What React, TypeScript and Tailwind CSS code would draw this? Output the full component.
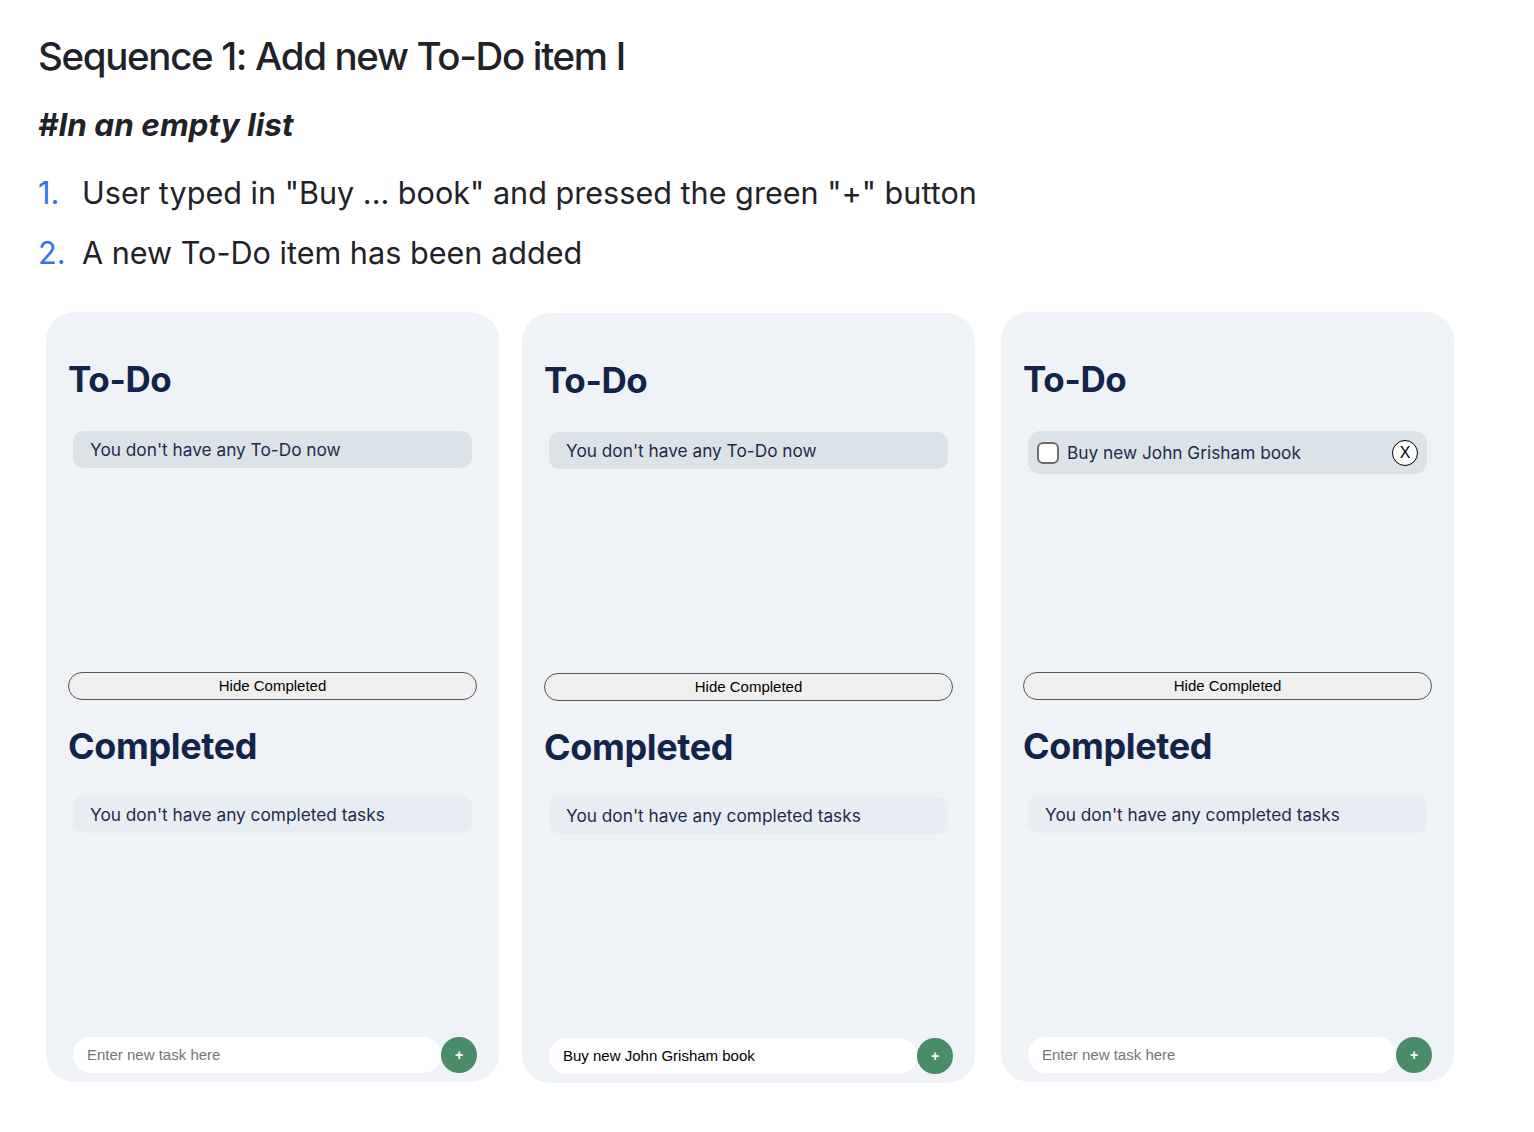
const inter = { fontFamily: "Inter, 'Noto Sans', sans-serif" };
const arial = { fontFamily: "'Liberation Sans', Arial, sans-serif" };

function EmptyBox({ text, tone }: { text: string; tone: "todo" | "done" }) {
  return (
    <div
      className={`mx-[5px] h-[37px] rounded-[10px] px-[17px] flex items-center text-[17.25px] text-[#1e2b4d] ${
        tone === "todo" ? "bg-[#dbe3e8]" : "bg-[#e8edf3]"
      }`}
    >
      {text}
    </div>
  );
}

function TodoItem({ text }: { text: string }) {
  return (
    <div className="mx-[5px] h-[43px] rounded-[12px] bg-[#dbe3e8] pl-[9px] pr-[9px] flex items-center">
      <span className="w-[22px] h-[22px] rounded-[6px] border-2 border-[#6b6b6b] bg-white shrink-0" />
      <span className="ml-[8px] text-[17.25px] text-[#1e2b4d] flex-1">{text}</span>
      <span
        className="w-[26px] h-[26px] rounded-full border border-black bg-white flex items-center justify-center text-[16px] text-black"
        style={arial}
      >
        X
      </span>
    </div>
  );
}

function Card({ items, inputValue, className = "" }: { items: string[]; inputValue?: string; className?: string }) {
  return (
    <div className={`w-[453px] h-[770px] rounded-[28px] bg-[#eff3f8] px-[22px] pt-[45px] pb-[9px] flex flex-col ${className}`} style={inter}>
      <h2 className="text-[35px] leading-[44px] font-bold text-[#13244a] tracking-[-0.01em]">To-Do</h2>
      <div className="mt-[30px] h-[241px]">
        {items.length === 0 ? (
          <EmptyBox text="You don't have any To-Do now" tone="todo" />
        ) : (
          items.map((t) => <TodoItem key={t} text={t} />)
        )}
      </div>
      <button className="h-[28px] w-full rounded-full border border-[#555] bg-[#efefef] text-[15px] text-black" style={arial}>
        Hide Completed
      </button>
      <h2 className="mt-[24px] text-[36px] leading-[44px] font-bold text-[#13244a] tracking-[-0.01em]">Completed</h2>
      <div className="mt-[28px]">
        <EmptyBox text="You don't have any completed tasks" tone="done" />
      </div>
      <div className="mt-auto flex items-center pl-[5px]" style={arial}>
        <div className="flex-1 h-[36px] rounded-full bg-white pl-[14px] flex items-center text-[15px]">
          {inputValue ? (
            <span className="text-black">{inputValue}</span>
          ) : (
            <span className="text-[#757575]">Enter new task here</span>
          )}
        </div>
        <button className="w-[36px] h-[36px] rounded-full bg-[#4a8c68] text-white text-[14px] font-bold flex items-center justify-center">
          +
        </button>
      </div>
    </div>
  );
}

export default function App() {
  return (
    <div className="min-h-screen bg-white pl-[38px] pt-[32px] text-[#1f2328]" style={inter}>
      <h1 className="text-[38.5px] leading-[48px] font-medium tracking-[-0.035em]">Sequence 1: Add new To-Do item I</h1>
      <p className="mt-[27px] text-[31.5px] leading-[36px] font-bold italic">#In an empty list</p>
      <ol className="mt-[26px] flex flex-col gap-[12px] text-[30.6px] leading-[48px]">
        <li className="flex">
          <span className="w-[44px] text-[#3572ef]">1.</span>
          <span>User typed in "Buy ... book" and pressed the green "+" button</span>
        </li>
        <li className="flex">
          <span className="w-[44px] text-[#3572ef]">2.</span>
          <span>A new To-Do item has been added</span>
        </li>
      </ol>
      <div className="mt-[35px] ml-[8px] flex gap-[23px] items-start">
        <Card items={[]} />
        <Card items={[]} inputValue="Buy new John Grisham book" className="mt-px" />
        <Card items={["Buy new John Grisham book"]} className="ml-[3px]" />
      </div>
    </div>
  );
}
